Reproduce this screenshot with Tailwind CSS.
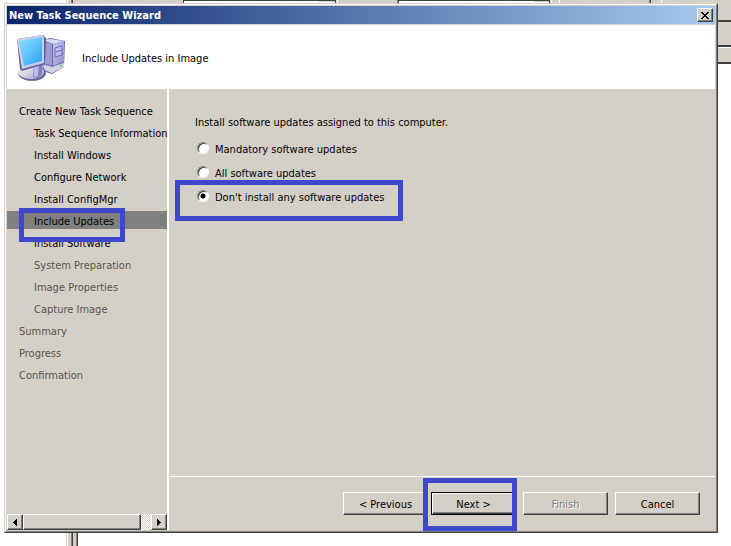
<!DOCTYPE html>
<html lang="en">
<head>
    <meta charset="UTF-8">
    <meta name="viewport" content="width=device-width, initial-scale=1.0">
    <title>New Task Sequence Wizard</title>
    <script src="https://cdn.jsdelivr.net/npm/@tailwindcss/browser@4"></script>
</head>
<body class="relative h-screen overflow-hidden bg-white font-['DejaVu_Sans_Condensed','Noto_Sans',sans-serif] text-[11px] leading-[18px] text-black">
    <!-- console window behind the wizard -->
    <div class="absolute inset-0 flex flex-col" aria-hidden="true">
        <div class="flex h-[3px] shrink-0 bg-[#d4d0c8]">
            <div class="w-[66px] bg-white"></div>
            <div class="ml-px w-px bg-white"></div>
            <div class="ml-[3px] w-px bg-[#808080]"></div>
            <div class="w-px bg-[#404040]"></div>
            <div class="ml-[110px] w-[153px] border-t border-x border-[#404040] bg-white flex justify-end"><div class="h-px w-4 bg-[#d4d0c8]"></div></div>
            <div class="ml-px w-px bg-white"></div>
            <div class="ml-[59px] w-px bg-[#808080]"></div>
            <div class="w-[152px] border-t border-x border-[#404040] bg-white flex justify-end"><div class="h-px w-4 bg-[#d4d0c8]"></div></div>
            <div class="ml-px w-px bg-white"></div>
            <div class="ml-[7px] w-px bg-white"></div>
            <div class="ml-[89px] w-px bg-[#808080]"></div>
            <div class="w-px bg-[#404040]"></div>
            <div class="ml-[10px] w-px bg-white"></div>
        </div>
        <div class="flex grow">
            <div class="ml-[66px] flex w-3 bg-[#d4d0c8]">
                <div class="ml-px w-px bg-white"></div>
                <div class="ml-[3px] w-px bg-[#808080]"></div>
                <div class="w-px bg-[#404040]"></div>
                <div class="ml-[3px] w-px bg-[#808080]"></div>
                <div class="w-px bg-[#404040]"></div>
            </div>
            <div class="ml-auto w-[14px]">
                <div class="h-[19px] border-b-2 border-[#404040] bg-[#d4d0c8]"></div>
                <div class="h-[25px] border-b-2 border-[#404040] bg-[#d4d0c8]"></div>
                <div class="h-[17px] border-t border-b-2 border-t-white border-b-[#404040] bg-[#d4d0c8]"></div>
            </div>
        </div>
    </div>

    <div class="relative h-full pt-[3px] pr-[13px] pb-[13px] pl-1">
        <div class="h-full border border-[#d4d0c8] border-r-[#404040] border-b-[#404040]">
            <div class="flex h-full flex-col border border-white border-r-[#808080] border-b-[#808080] bg-[#d4d0c8] p-px">
                <div class="flex h-[18px] shrink-0 items-center justify-between bg-linear-to-r/srgb from-[#0a246a] to-[#a6caf0] px-0.5">
                    <h1 class="pt-px font-bold text-white">New Task Sequence Wizard</h1>
                    <button type="button" aria-label="Close" class="flex h-[14px] w-4 items-center justify-center border border-white border-r-[#404040] border-b-[#404040] bg-[#d4d0c8] shadow-[inset_-1px_-1px_#808080]">
                        <svg class="h-[7px] w-2" viewBox="0 0 8 7" shape-rendering="crispEdges"><path d="M0 0h2v1h1v1h2V1h1V0h2v1H7v1H6v1H5v1h1v1h1v1h1v1H6V6H5V5H3v1H2v1H0V6h1V5h1V4h1V3H2V2H1V1H0z"/></svg>
                    </button>
                </div>

                <div class="mt-px flex h-16 shrink-0 items-center bg-white pt-1 pl-[7px]">
                    <svg class="h-[52px] w-[54px]" viewBox="0 0 54 52">
                        <defs>
                            <linearGradient id="screen" x1="0" y1="0" x2="1" y2="1">
                                <stop offset="0" stop-color="#8fdcff"/><stop offset=".5" stop-color="#5fc3fd"/><stop offset="1" stop-color="#2f9cf6"/>
                            </linearGradient>
                            <linearGradient id="front" x1="0" y1="0" x2="1" y2="1">
                                <stop offset="0" stop-color="#c6c6ee"/><stop offset="1" stop-color="#8787cb"/>
                            </linearGradient>
                            <linearGradient id="base" x1="0" y1="0" x2="1" y2="1">
                                <stop offset="0" stop-color="#fff"/><stop offset="1" stop-color="#a3a3c8"/>
                            </linearGradient>
                        </defs>
                        <!-- tower -->
                        <path d="M29 7l7-2 15 3-1 26-12 7-9-3z" fill="#6565a6"/>
                        <path d="M29 8l9 3v28l-9-3z" fill="#9d9dd6"/>
                        <path d="M29 7l7-1 14 2-11 3z" fill="#dcdcf6"/>
                        <path d="M39 11l11-3v24l-11 7z" fill="url(#front)"/>
                        <path d="M41 15l7-2v9l-7 2zM41 19l7-2" fill="#bcbcea" stroke="#6c6cb2"/>
                        <path d="M30 32l8 2 12-4v4l-12 6-8-3z" fill="#d3d3e6"/>
                        <path d="M30 31l9 2 11-4" fill="none" stroke="#7272ac"/>
                        <circle cx="47" cy="33" r="1" fill="#4ecb4e"/>
                        <!-- stand -->
                        <ellipse cx="18" cy="40" rx="14" ry="8" fill="#66669b"/>
                        <ellipse cx="17" cy="39" rx="13" ry="7" fill="url(#base)"/>
                        <path d="M19 33l10-3-1 11c-2 4-8 5-9 2z" fill="#7d7dc0"/>
                        <path d="M19 33l6-2-1 12c-2 1-4 1-4 0z" fill="#bcbcea"/>
                        <!-- monitor -->
                        <path d="M3 6l26-4 3 3-1 26-23 7-2-2z" fill="#5f5f98"/>
                        <path d="M3 6l26-4 1 2v26L8 36z" fill="#ceceea"/>
                        <path d="M5 8l23-4v24L10 33z" fill="url(#screen)"/>
                    </svg>
                    <h2 class="ml-[14px]">Include Updates in Image</h2>
                </div>

                <div class="flex min-h-0 grow">
                    <nav class="flex w-[162px] shrink-0 flex-col border-r-2 border-white pt-3">
                        <ol class="grid auto-rows-[18px] grid-cols-1 gap-1 leading-[22px] whitespace-nowrap">
                            <li class="pl-3">Create New Task Sequence</li>
                            <li class="pl-[27px]">Task Sequence Information</li>
                            <li class="pl-[27px]">Install Windows</li>
                            <li class="pl-[27px]">Configure Network</li>
                            <li class="pl-[27px]">Install ConfigMgr</li>
                            <li class="relative bg-[#808080] pl-[27px]" aria-current="step">Include Updates
                                <span class="absolute -top-[3px] left-3 z-10 h-[34px] w-[106px] border-[5px] border-[#3f48cc]"></span>
                            </li>
                            <li class="pl-[27px]">Install Software</li>
                            <li class="pl-[27px] text-[#57534c]">System Preparation</li>
                            <li class="pl-[27px] text-[#57534c]">Image Properties</li>
                            <li class="pl-[27px] text-[#57534c]">Capture Image</li>
                            <li class="pl-3 text-[#57534c]">Summary</li>
                            <li class="pl-3 text-[#57534c]">Progress</li>
                            <li class="pl-3 text-[#57534c]">Confirmation</li>
                        </ol>
                        <!-- horizontal scrollbar -->
                        <div class="mt-auto flex h-4 bg-[repeating-conic-gradient(#fff_0_25%,#d4d0c8_0_50%)] bg-size-[2px_2px]">
                            <button type="button" aria-label="Scroll left" class="flex w-4 items-center justify-center border border-white border-r-[#404040] border-b-[#404040] bg-[#d4d0c8] shadow-[inset_-1px_-1px_#808080]">
                                <svg class="h-[7px] w-1" viewBox="0 0 4 7" shape-rendering="crispEdges"><path d="M4 0v7H3V6H2V5H1V4H0V3h1V2h1V1h1V0z"/></svg>
                            </button>
                            <div class="w-[118px] border border-white border-r-[#404040] border-b-[#404040] bg-[#d4d0c8] shadow-[inset_-1px_-1px_#808080]"></div>
                            <button type="button" aria-label="Scroll right" class="ml-auto flex w-4 items-center justify-center border border-white border-r-[#404040] border-b-[#404040] bg-[#d4d0c8] shadow-[inset_-1px_-1px_#808080]">
                                <svg class="h-[7px] w-1" viewBox="0 0 4 7" shape-rendering="crispEdges"><path d="M0 0v7h1V6h1V5h1V4h1V3H3V2H2V1H1V0z"/></svg>
                            </button>
                        </div>
                    </nav>

                    <main class="flex grow flex-col">
                        <fieldset class="grow pt-[25px] pl-[26px]">
                            <legend class="float-left w-full">Install software updates assigned to this computer.</legend>
                            <div class="clear-both flex flex-col items-start gap-1.5 pt-[9px]">
                                <label class="flex items-start gap-1.5 pl-0.5">
                                    <input type="radio" name="updates" class="mt-px size-3 appearance-none rounded-full border border-[#808080] border-r-white border-b-white bg-white shadow-[inset_1px_1px_#404040] checked:bg-[radial-gradient(circle,#000_2px,#fff_3px)]">
                                    Mandatory software updates
                                </label>
                                <label class="flex items-start gap-1.5 pl-0.5">
                                    <input type="radio" name="updates" class="mt-px size-3 appearance-none rounded-full border border-[#808080] border-r-white border-b-white bg-white shadow-[inset_1px_1px_#404040] checked:bg-[radial-gradient(circle,#000_2px,#fff_3px)]">
                                    All software updates
                                </label>
                                <label class="relative flex items-start gap-1.5 pl-0.5">
                                    <input type="radio" name="updates" checked class="mt-px size-3 appearance-none rounded-full border border-[#808080] border-r-white border-b-white bg-white shadow-[inset_1px_1px_#404040] checked:bg-[radial-gradient(circle,#000_2px,#fff_3px)]">
                                    Don't install any software updates
                                    <span class="absolute -top-[9px] -left-5 h-[41px] w-[228px] border-[5px] border-[#3f48cc]"></span>
                                </label>
                            </div>
                        </fieldset>
                        <div class="flex h-[54px] shrink-0 justify-end border-t border-white pt-[15px] pr-[15px] leading-none">
                            <button type="button" class="h-[23px] w-[85px] border border-white border-r-[#404040] border-b-[#404040] pt-0.5 shadow-[inset_-1px_-1px_#808080]">&lt; Previous</button>
                            <div class="relative ml-[3px] h-[23px]">
                                <button type="button" class="h-[23px] w-[85px] border border-black pt-0.5 shadow-[inset_1px_1px_#fff,inset_-1px_-1px_#404040,inset_-2px_-2px_#808080]">Next &gt;</button>
                                <span class="absolute -top-[14px] -left-2 h-[53px] w-[94px] border-[5px] border-[#3f48cc]"></span>
                            </div>
                            <button type="button" disabled class="ml-[7px] h-[23px] w-[85px] border border-white border-r-[#404040] border-b-[#404040] pt-0.5 text-[#808080] shadow-[inset_-1px_-1px_#808080] text-shadow-[1px_1px_#fff]">Finish</button>
                            <button type="button" class="ml-[7px] h-[23px] w-[85px] border border-white border-r-[#404040] border-b-[#404040] pt-0.5 shadow-[inset_-1px_-1px_#808080]">Cancel</button>
                        </div>
                    </main>
                </div>
            </div>
        </div>
    </div>
</body>
</html>
